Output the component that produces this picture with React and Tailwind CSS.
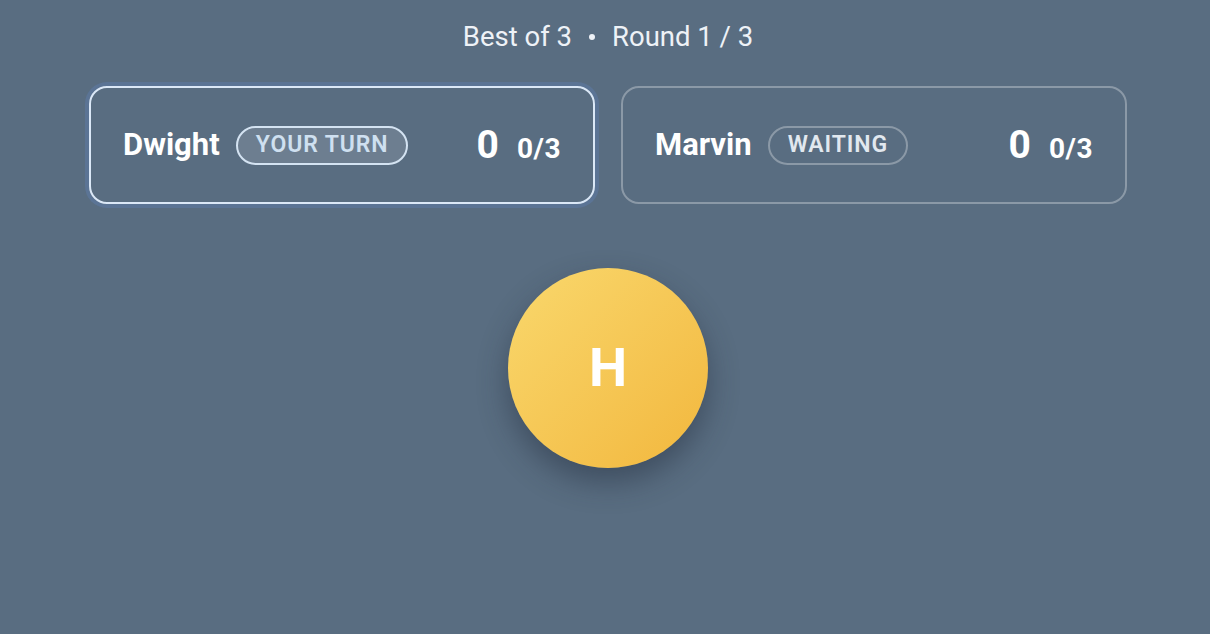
const PlayerCard = ({ name, status, score, wins, active }) => {
  return (
    <div
      className={`flex items-center justify-between h-[118px] rounded-[18px] pl-[32px] pr-[32px] ${
        active
          ? "border-2 border-[#dbe8f7] shadow-[0_0_0_4px_rgba(92,122,165,0.55)]"
          : "border-2 border-[rgba(255,255,255,0.3)]"
      }`}
    >
      <div className="flex items-center gap-[16px]">
        <span className="text-[31px] font-bold text-white">{name}</span>
        <span
          className={`h-[39px] px-[18px] flex items-center rounded-full text-[23px] font-semibold tracking-[0.9px] ${
            active
              ? "border-2 border-[#d4e3f2] bg-[rgba(255,255,255,0.12)] text-[#cfe0f0]"
              : "border-2 border-[rgba(255,255,255,0.3)] text-[#e1e8ef]"
          }`}
        >
          {status}
        </span>
      </div>
      <div className="flex items-baseline gap-[17px] text-white font-bold">
        <span className="text-[39px] leading-none tracking-[1px]">{score}</span>
        <span className="text-[28px] leading-none tracking-[0.5px]">{wins}</span>
      </div>
    </div>
  );
};

export default function App() {
  return (
    <div
      className="w-full min-h-[634px] bg-[#596d81] flex flex-col items-center pl-[6px]"
      style={{ fontFamily: "Roboto, 'Noto Sans', sans-serif" }}
    >
      <div className="pt-[18px] h-[86px] flex items-start text-[27.5px] leading-[38px] text-[#eef2f7]">
        <span>Best of 3</span>
        <span className="mx-[17px] h-[38px] flex items-center">
          <span className="w-[6px] h-[6px] rounded-full bg-[#eef2f7]" />
        </span>
        <span>Round 1 / 3</span>
      </div>

      <div className="w-[1038px] grid grid-cols-2 gap-[26px]">
        <PlayerCard name="Dwight" status="YOUR TURN" score="0" wins="0/3" active />
        <PlayerCard name="Marvin" status="WAITING" score="0" wins="0/3" />
      </div>

      <div className="mt-[64px] w-[200px] h-[200px] rounded-full bg-gradient-to-br from-[#f9d86c] to-[#f2b73c] shadow-[0_14px_30px_rgba(30,40,55,0.45)] flex items-center justify-center">
        <span className="text-[54px] font-bold text-white leading-none">H</span>
      </div>
    </div>
  );
}
